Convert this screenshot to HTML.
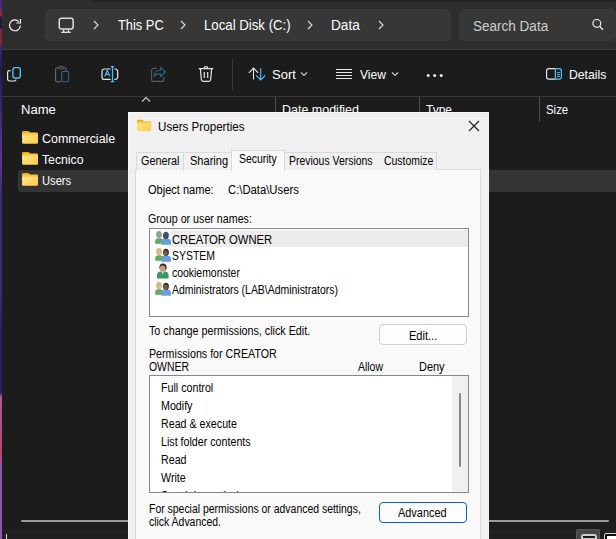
<!DOCTYPE html>
<html><head><meta charset="utf-8">
<style>
*{margin:0;padding:0;box-sizing:border-box}
html,body{width:616px;height:539px;overflow:hidden;background:#1c1c1c;font-family:"Liberation Sans",sans-serif}
.a{position:absolute}
.t{position:absolute;white-space:pre;line-height:1;transform-origin:0 0}
</style></head><body>
<div class="a" style="left:0px;top:0px;width:2px;height:539px;background:linear-gradient(#4a2a80 0,#4a2a80 9px,#8a2a3a 10px,#8a2a3a 16px,#1e1a40 17px,#1e1a40 28px,#7a2a3a 29px,#7a2a3a 45px,#3a2a7a 46px,#1e1c48 70px,#3a2a70 110px,#5a3a8a 160px,#3a2a70 200px,#3a2a70 300px,#2a2060 330px,#2a2060 393px,#b05a8a 397px,#a05a90 420px,#b04a6a 450px,#8a5aa0 470px,#8a5aa0 539px)"></div>
<div class="a" style="left:2px;top:0px;width:614px;height:49px;background:#2d2d2d"></div>
<div class="a" style="left:94px;top:0px;width:522px;height:2px;background:linear-gradient(#1f1f1f,#272727)"></div>
<div class="a" style="left:2px;top:49px;width:614px;height:1px;background:#3b3b3b"></div>
<div class="a" style="left:2px;top:96px;width:614px;height:1px;background:#383838"></div>
<svg class="a" style="left:7px;top:16.5px" width="16" height="16" viewBox="0 0 16 16"><path d="M13.3 8.4A5.4 5.4 0 1 1 11.9 4.7" fill="none" stroke="#f2f2f2" stroke-width="1.2"/><path d="M9.4 6H13.5V2" fill="none" stroke="#f2f2f2" stroke-width="1.2"/></svg>
<div class="a" style="left:45px;top:9px;width:406px;height:32px;background:#373737;border-radius:5px"></div>
<svg class="a" style="left:58px;top:16.5px" width="18" height="18" viewBox="0 0 18 18"><rect x="1.25" y="1.35" width="13.9" height="10.7" rx="2.2" fill="none" stroke="#dedede" stroke-width="1.5"/><path d="M5.6 12.6v2.4M10.4 12.6v2.4" stroke="#dedede" stroke-width="1.3"/><path d="M3.2 15.3h9.6" stroke="#dedede" stroke-width="1.4"/></svg>
<svg class="a" style="left:92px;top:20px" width="8" height="10" viewBox="0 0 8 10"><path d="M2 1l4 4-4 4" fill="none" stroke="#ddd" stroke-width="1.1"/></svg>
<svg class="a" style="left:179px;top:20px" width="8" height="10" viewBox="0 0 8 10"><path d="M2 1l4 4-4 4" fill="none" stroke="#ddd" stroke-width="1.1"/></svg>
<svg class="a" style="left:306px;top:20px" width="8" height="10" viewBox="0 0 8 10"><path d="M2 1l4 4-4 4" fill="none" stroke="#ddd" stroke-width="1.1"/></svg>
<svg class="a" style="left:377px;top:20px" width="8" height="10" viewBox="0 0 8 10"><path d="M2 1l4 4-4 4" fill="none" stroke="#ddd" stroke-width="1.1"/></svg>
<div class="t" style="left:118px;top:18px;font-size:14px;color:#fff;transform:scaleX(0.918)">This PC</div>
<div class="t" style="left:204px;top:18px;font-size:14px;color:#fff;transform:scaleX(0.944)">Local Disk (C:)</div>
<div class="t" style="left:331px;top:18px;font-size:14px;color:#fff;transform:scaleX(0.976)">Data</div>
<div class="a" style="left:459px;top:9px;width:157px;height:32px;background:#373737;border-radius:5px"></div>
<div class="t" style="left:473px;top:19px;font-size:14px;color:#cfcfcf;transform:scaleX(0.966)">Search Data</div>
<svg class="a" style="left:591px;top:18px" width="14" height="14" viewBox="0 0 14 14"><circle cx="5.8" cy="5.4" r="3.9" fill="none" stroke="#f0f0f0" stroke-width="1.2"/><path d="M8.6 8.2L12 11.8" stroke="#f0f0f0" stroke-width="1.3"/></svg>
<svg class="a" style="left:6px;top:65px" width="18" height="18" viewBox="0 0 18 18"><rect x="6.9" y="2.6" width="7.4" height="10.4" rx="2" fill="none" stroke="#4cc2ff" stroke-width="1.4"/><path d="M4.6 5.6H3.4A1.8 1.8 0 0 0 1.6 7.4v6.6a2 2 0 0 0 2 2h4.6a1.8 1.8 0 0 0 1.8-1.4" fill="none" stroke="#e6e6e6" stroke-width="1.2"/></svg>
<svg class="a" style="left:53px;top:65px" width="18" height="18" viewBox="0 0 18 18"><path d="M8 16.8H4.2A1.6 1.6 0 0 1 2.6 15.2V4.4A1.6 1.6 0 0 1 4.2 2.8H5.6M10.4 2.8H11.4A1.6 1.6 0 0 1 13 4.4V5.8" fill="none" stroke="#6a6a6a" stroke-width="1.1"/><rect x="5.6" y="1.6" width="4.8" height="2.2" rx="1" fill="none" stroke="#6a6a6a" stroke-width="1"/><rect x="8.7" y="6.4" width="7" height="10.4" rx="1.5" fill="none" stroke="#2e6a8a" stroke-width="1.1"/></svg>
<svg class="a" style="left:101px;top:65px" width="18" height="18" viewBox="0 0 18 18"><path d="M9.6 4H3.2A2.2 2.2 0 0 0 1 6.2v6a2.2 2.2 0 0 0 2.2 2.2h6.4M13.4 4h.9a2.4 2.4 0 0 1 2.4 2.4v5.6a2.4 2.4 0 0 1-2.4 2.4h-.9" fill="none" stroke="#e6e6e6" stroke-width="1.2"/><path d="M9.8 1.6h3.4M11.5 1.6v15M9.8 16.6h3.4" stroke="#4cc2ff" stroke-width="1.2"/><path d="M3.8 11.4L6.3 5.2L8.8 11.4M4.7 9.4H7.9" fill="none" stroke="#4cc2ff" stroke-width="1.1"/></svg>
<svg class="a" style="left:146px;top:62px" width="24" height="24" viewBox="0 0 24 24"><path d="M10.6 6.4H7.6a2 2 0 0 0-2 2v9a2 2 0 0 0 2 2h8.2a2 2 0 0 0 2-2v-2.6" fill="none" stroke="#5a5a5a" stroke-width="1.1"/><path d="M19.4 10L14.7 5.5V8C11.2 8.2 8.4 10.5 8 14.2C9.6 12.6 11.8 11.8 14.6 11.9V14.5Z" fill="none" stroke="#2b6888" stroke-width="1.1" stroke-linejoin="round"/></svg>
<svg class="a" style="left:197px;top:65px" width="18" height="18" viewBox="0 0 18 18"><path d="M1.8 3.6h14.4M7.1 3.4V3.2a1.8 1.6 0 0 1 3.6 0v.2" fill="none" stroke="#e6e6e6" stroke-width="1.2"/><path d="M3.4 4l.9 10.5a2 2 0 0 0 2 1.8h5.4a2 2 0 0 0 2-1.8L14.6 4" fill="none" stroke="#e6e6e6" stroke-width="1.2"/><path d="M7.3 7v6M10.7 7v6" stroke="#e6e6e6" stroke-width="1.2"/></svg>
<div class="a" style="left:232px;top:58px;width:1px;height:32px;background:#383838"></div>
<svg class="a" style="left:247px;top:65px" width="19" height="18" viewBox="0 0 19 18"><path d="M6.5 14.6V3.2M1.8 7.8L6.5 3.1l4.7 4.7" fill="none" stroke="#e6e6e6" stroke-width="1.1"/><path d="M13.7 3.2V14.8M9.1 10.3l4.6 4.6 4.6-4.6" fill="none" stroke="#4cc2ff" stroke-width="1.1"/></svg>
<div class="t" style="left:272px;top:68px;font-size:13px;color:#fff">Sort</div>
<svg class="a" style="left:300px;top:71px" width="8" height="6" viewBox="0 0 8 6"><path d="M1 1.5l3 3 3-3" fill="none" stroke="#ccc" stroke-width="1.1"/></svg>
<svg class="a" style="left:335px;top:68px" width="18" height="12" viewBox="0 0 18 12"><path d="M1 1.5h16M1 4.5h16M1 7.5h16M1 10.5h16" stroke="#e6e6e6" stroke-width="1"/></svg>
<div class="t" style="left:360px;top:68px;font-size:13px;color:#fff;transform:scaleX(0.93)">View</div>
<svg class="a" style="left:391px;top:71px" width="8" height="6" viewBox="0 0 8 6"><path d="M1 1.5l3 3 3-3" fill="none" stroke="#ccc" stroke-width="1.1"/></svg>
<svg class="a" style="left:426px;top:72.5px" width="18" height="5" viewBox="0 0 18 5"><circle cx="2.2" cy="2.5" r="1.5" fill="#eee"/><circle cx="8.7" cy="2.5" r="1.5" fill="#eee"/><circle cx="15.2" cy="2.5" r="1.5" fill="#eee"/></svg>
<svg class="a" style="left:545px;top:67px" width="18" height="14" viewBox="0 0 18 14"><path d="M10.5 1.6H3.8a2.2 2.2 0 0 0-2.2 2.2v6.2a2.2 2.2 0 0 0 2.2 2.2h6.7" fill="none" stroke="#e6e6e6" stroke-width="1.2"/><path d="M10.4 1.6H14.2a2.2 2.2 0 0 1 2.2 2.2v6.2a2.2 2.2 0 0 1-2.2 2.2H10.4z" fill="none" stroke="#4cc2ff" stroke-width="1.2"/><path d="M12.1 5.5h2.7M12.1 7.5h2.7M12.1 9.5h2.7" stroke="#4cc2ff" stroke-width="1"/></svg>
<div class="t" style="left:569px;top:68px;font-size:13px;color:#fff;transform:scaleX(0.94)">Details</div>
<svg class="a" style="left:141px;top:96px" width="10" height="7" viewBox="0 0 10 7"><path d="M1 5.5l4-4 4 4" fill="none" stroke="#cfcfcf" stroke-width="1.1"/></svg>
<div class="t" style="left:21px;top:104px;font-size:12px;color:#fff;transform:scaleX(1.09)">Name</div>
<div class="a" style="left:275px;top:97px;width:1px;height:25px;background:#505050"></div>
<div class="t" style="left:282px;top:104px;font-size:12px;color:#fff;transform:scaleX(1.04)">Date modified</div>
<div class="a" style="left:419px;top:97px;width:1px;height:25px;background:#505050"></div>
<div class="t" style="left:426px;top:104px;font-size:12px;color:#fff">Type</div>
<div class="a" style="left:539px;top:97px;width:1px;height:25px;background:#505050"></div>
<div class="t" style="left:546px;top:104px;font-size:12px;color:#fff;transform:scaleX(0.95)">Size</div>
<div class="a" style="left:18px;top:170px;width:610px;height:22px;background:#343434;border-radius:3px"></div>
<svg class="a" style="left:21px;top:130px" width="18" height="15" viewBox="0 0 18 15"><defs><linearGradient id="fg1" x1="0" y1="0" x2="1" y2="1"><stop offset="0" stop-color="#ffe596"/><stop offset="1" stop-color="#ffc93a"/></linearGradient></defs><path d="M1.1 2.2a1.3 1.3 0 0 1 1.3-1.3H7.4l2.2 2.2V7H1.1z" fill="#f0ae00"/><rect x="1.1" y="2.6" width="15.9" height="6" rx="1.2" fill="#f9c640"/><rect x="1.1" y="4.8" width="15.9" height="9" rx="1.2" fill="url(#fg1)"/></svg>
<svg class="a" style="left:21px;top:151px" width="18" height="15" viewBox="0 0 18 15"><defs><linearGradient id="fg2" x1="0" y1="0" x2="1" y2="1"><stop offset="0" stop-color="#ffe596"/><stop offset="1" stop-color="#ffc93a"/></linearGradient></defs><path d="M1.1 2.2a1.3 1.3 0 0 1 1.3-1.3H7.4l2.2 2.2V7H1.1z" fill="#f0ae00"/><rect x="1.1" y="2.6" width="15.9" height="6" rx="1.2" fill="#f9c640"/><rect x="1.1" y="4.8" width="15.9" height="9" rx="1.2" fill="url(#fg2)"/></svg>
<svg class="a" style="left:21px;top:172px" width="18" height="15" viewBox="0 0 18 15"><defs><linearGradient id="fg3" x1="0" y1="0" x2="1" y2="1"><stop offset="0" stop-color="#ffe596"/><stop offset="1" stop-color="#ffc93a"/></linearGradient></defs><path d="M1.1 2.2a1.3 1.3 0 0 1 1.3-1.3H7.4l2.2 2.2V7H1.1z" fill="#f0ae00"/><rect x="1.1" y="2.6" width="15.9" height="6" rx="1.2" fill="#f9c640"/><rect x="1.1" y="4.8" width="15.9" height="9" rx="1.2" fill="url(#fg3)"/></svg>
<div class="t" style="left:42px;top:133px;font-size:12px;color:#fff;transform:scaleX(1.036)">Commerciale</div>
<div class="t" style="left:42px;top:154px;font-size:12px;color:#fff;transform:scaleX(1.02)">Tecnico</div>
<div class="t" style="left:42px;top:175px;font-size:12px;color:#fff;transform:scaleX(0.93)">Users</div>
<div class="a" style="left:21px;top:520px;width:588px;height:2px;background:#9b9b9b;border-radius:1px"></div>
<div class="a" style="left:2px;top:529px;width:614px;height:10px;background:#202020"></div>
<div class="a" style="left:6px;top:534px;width:1px;height:5px;background:#ddd"></div>
<div class="a" style="left:576px;top:529px;width:24px;height:10px;background:#474747;border:1px solid #575757;border-bottom:none;border-radius:2px 2px 0 0"></div>
<div class="a" style="left:581px;top:534px;width:16px;height:8px;background:#cfcfcf;border-radius:3px"></div>
<div class="a" style="left:583px;top:536px;width:12px;height:1.5px;background:#1a1a1a"></div>
<div class="a" style="left:604px;top:533px;width:14px;height:8px;background:#111;border:1.5px solid #d8d8d8;border-radius:2px"></div>
<div class="a" style="left:607px;top:535.5px;width:10px;height:6px;background:#fff"></div>
<div class="a" style="left:128px;top:112px;width:361px;height:427px;background:#f0f0f0;border:1px solid #f7f7f7;border-bottom:none"></div>
<svg class="a" style="left:136px;top:119px" width="16" height="13" viewBox="0 0 16 13"><defs><linearGradient id="fg9" x1="0" y1="0" x2="1" y2="1"><stop offset="0" stop-color="#ffe596"/><stop offset="1" stop-color="#ffc93a"/></linearGradient></defs><path d="M1 2a1.2 1.2 0 0 1 1.2-1.2H6.5l2 2V6H1z" fill="#f0ae00"/><rect x="1" y="2.3" width="14.2" height="5" rx="1" fill="#f9c640"/><rect x="1" y="4.1" width="14.2" height="8" rx="1" fill="url(#fg9)"/></svg>
<div class="t" style="left:158px;top:121px;font-size:12.5px;color:#000;transform:scaleX(0.93)">Users Properties</div>
<svg class="a" style="left:468px;top:120px" width="12" height="12" viewBox="0 0 12 12"><path d="M1 1l10 10M11 1L1 11" stroke="#1a1a1a" stroke-width="1.1"/></svg>
<div class="a" style="left:135px;top:169px;width:346px;height:380px;background:#f9f9f9;border:1px solid #dadada"></div>
<div class="a" style="left:136px;top:152px;width:48px;height:18px;background:#f0f0f0;border:1px solid #dadada;border-bottom:none"></div>
<div class="a" style="left:184px;top:152px;width:48px;height:18px;background:#f0f0f0;border:1px solid #dadada;border-bottom:none;border-left:none"></div>
<div class="a" style="left:284px;top:152px;width:95px;height:18px;background:#f0f0f0;border:1px solid #dadada;border-bottom:none;border-left:none"></div>
<div class="a" style="left:378px;top:152px;width:59px;height:18px;background:#f0f0f0;border:1px solid #dadada;border-bottom:none;border-left:none"></div>
<div class="a" style="left:231px;top:150px;width:54px;height:21px;background:#f9f9f9;border:1px solid #dadada;border-bottom:none"></div>
<div class="t" style="left:141px;top:155px;font-size:12px;color:#000;transform:scaleX(0.9)">General</div>
<div class="t" style="left:190px;top:155px;font-size:12px;color:#000;transform:scaleX(0.92)">Sharing</div>
<div class="t" style="left:239px;top:153px;font-size:12px;color:#000;transform:scaleX(0.87)">Security</div>
<div class="t" style="left:289px;top:155px;font-size:12px;color:#000;transform:scaleX(0.87)">Previous Versions</div>
<div class="t" style="left:384px;top:155px;font-size:12px;color:#000;transform:scaleX(0.87)">Customize</div>
<div class="t" style="left:148px;top:184px;font-size:12px;color:#000;transform:scaleX(0.92)">Object name:</div>
<div class="t" style="left:227.5px;top:184px;font-size:12px;color:#000;transform:scaleX(0.94)">C:\Data\Users</div>
<div class="t" style="left:148px;top:213px;font-size:12px;color:#000;transform:scaleX(0.89)">Group or user names:</div>
<div class="a" style="left:149px;top:228px;width:320px;height:89px;background:#fff;border:1px solid #828790"></div>
<div class="a" style="left:171px;top:230px;width:297px;height:17px;background:#ececec"></div>
<svg class="a" style="left:155px;top:231px" width="16" height="16" viewBox="0 0 16 16"><path d="M0.2 12.8V10.4A3.2 3.2 0 0 1 3.4 7.2h1.6a3.2 3.2 0 0 1 3.2 3.2v2.4z" fill="#62a860"/><ellipse cx="4" cy="3.6" rx="2.8" ry="3.5" fill="#8c9a8c"/><ellipse cx="4.4" cy="4.3" rx="2" ry="2.7" fill="#9aa09a"/><path d="M6.4 13.8V11.2A3.4 3.4 0 0 1 9.8 7.8h2.8a3.4 3.4 0 0 1 3.4 3.4v2.6z" fill="#64a0dc"/><ellipse cx="11" cy="4.4" rx="2.9" ry="3.6" fill="#2f5f80"/><ellipse cx="10.6" cy="5.2" rx="2.2" ry="2.7" fill="#4a4a48"/></svg>
<svg class="a" style="left:155px;top:248px" width="16" height="16" viewBox="0 0 16 16"><path d="M0.2 12.8V10.4A3.2 3.2 0 0 1 3.4 7.2h1.6a3.2 3.2 0 0 1 3.2 3.2v2.4z" fill="#62a860"/><ellipse cx="4" cy="3.6" rx="2.8" ry="3.5" fill="#cfb870"/><ellipse cx="4.4" cy="4.3" rx="2" ry="2.7" fill="#e0b890"/><path d="M6.4 13.8V11.2A3.4 3.4 0 0 1 9.8 7.8h2.8a3.4 3.4 0 0 1 3.4 3.4v2.6z" fill="#64a0dc"/><ellipse cx="11" cy="4.4" rx="2.9" ry="3.6" fill="#2e2e2e"/><ellipse cx="10.6" cy="5.2" rx="2.2" ry="2.7" fill="#7a5a40"/></svg>
<svg class="a" style="left:156px;top:263px" width="16" height="16" viewBox="0 0 16 16"><path d="M1 15.6V12.6A4 4 0 0 1 5 8.6h3.6a4 4 0 0 1 4 4v3z" fill="#3f9660"/><path d="M5.6 8.6l1.2 3 1.2-3z" fill="#e8f0f0"/><ellipse cx="7" cy="4.3" rx="3.6" ry="3.8" fill="#2e2e2e"/><ellipse cx="6.6" cy="5.4" rx="2.8" ry="3" fill="#c9a07a"/></svg>
<svg class="a" style="left:155px;top:282px" width="16" height="16" viewBox="0 0 16 16"><path d="M0.2 12.8V10.4A3.2 3.2 0 0 1 3.4 7.2h1.6a3.2 3.2 0 0 1 3.2 3.2v2.4z" fill="#62a860"/><ellipse cx="4" cy="3.6" rx="2.8" ry="3.5" fill="#cfb870"/><ellipse cx="4.4" cy="4.3" rx="2" ry="2.7" fill="#e0b890"/><path d="M6.4 13.8V11.2A3.4 3.4 0 0 1 9.8 7.8h2.8a3.4 3.4 0 0 1 3.4 3.4v2.6z" fill="#64a0dc"/><ellipse cx="11" cy="4.4" rx="2.9" ry="3.6" fill="#2e2e2e"/><ellipse cx="10.6" cy="5.2" rx="2.2" ry="2.7" fill="#7a5a40"/></svg>
<div class="t" style="left:172px;top:233px;font-size:12px;color:#000;transform:scaleX(0.937);top:233.5px">CREATOR OWNER</div>
<div class="t" style="left:172px;top:250px;font-size:12px;color:#000;transform:scaleX(0.87)">SYSTEM</div>
<div class="t" style="left:172px;top:267px;font-size:12px;color:#000;transform:scaleX(0.87)">cookiemonster</div>
<div class="t" style="left:172px;top:284px;font-size:12px;color:#000;transform:scaleX(0.87)">Administrators (LAB\Administrators)</div>
<div class="t" style="left:149px;top:325px;font-size:12px;color:#000;transform:scaleX(0.895)">To change permissions, click Edit.</div>
<div class="a" style="left:379px;top:324px;width:88px;height:21px;background:#fdfdfd;border:1px solid #d0d0d0;border-radius:4px"></div>
<div class="t" style="left:409px;top:330px;font-size:12px;color:#000;transform:scaleX(0.92)">Edit...</div>
<div class="t" style="left:149px;top:348px;font-size:12px;color:#000;transform:scaleX(0.89)">Permissions for CREATOR</div>
<div class="t" style="left:149px;top:361px;font-size:12px;color:#000;transform:scaleX(0.87)">OWNER</div>
<div class="t" style="left:358px;top:361px;font-size:12px;color:#000;transform:scaleX(0.87)">Allow</div>
<div class="t" style="left:419px;top:361px;font-size:12px;color:#000;transform:scaleX(0.91)">Deny</div>
<div class="a" style="left:149px;top:375px;width:320px;height:118px;background:#fff;border:1px solid #828790;overflow:hidden">
<div class="a" style="left:302px;top:0px;width:16px;height:116px;background:#f0f0f0"></div>
<div class="a" style="left:309px;top:17px;width:2px;height:74px;background:#8a8a8a;border-radius:1px"></div>
<div class="t" style="left:10.5px;top:6px;font-size:12px;color:#000;transform:scaleX(0.89)">Full control</div>
<div class="t" style="left:10.5px;top:24px;font-size:12px;color:#000;transform:scaleX(0.89)">Modify</div>
<div class="t" style="left:10.5px;top:42px;font-size:12px;color:#000;transform:scaleX(0.89)">Read &amp; execute</div>
<div class="t" style="left:10.5px;top:60px;font-size:12px;color:#000;transform:scaleX(0.89)">List folder contents</div>
<div class="t" style="left:10.5px;top:78px;font-size:12px;color:#000;transform:scaleX(0.89)">Read</div>
<div class="t" style="left:10.5px;top:96px;font-size:12px;color:#000;transform:scaleX(0.89)">Write</div>
<div class="t" style="left:10.5px;top:114px;font-size:12px;color:#000;transform:scaleX(0.89)">Special permissions</div>
</div>
<div class="t" style="left:149px;top:503px;font-size:12px;color:#000;transform:scaleX(0.87)">For special permissions or advanced settings,</div>
<div class="t" style="left:149px;top:516px;font-size:12px;color:#000;transform:scaleX(0.87)">click Advanced.</div>
<div class="a" style="left:379px;top:502px;width:88px;height:21px;background:#fdfdfd;border:1px solid #0067c0;border-radius:4px"></div>
<div class="t" style="left:398px;top:507px;font-size:12px;color:#000;transform:scaleX(0.91)">Advanced</div>
</body></html>
